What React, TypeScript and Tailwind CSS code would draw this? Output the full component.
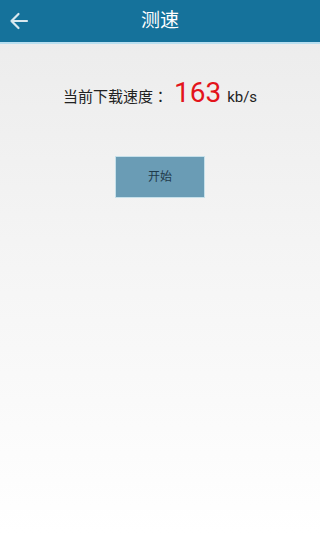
import React from "react";

export default function App() {
  return (
    <div
      className="w-[320px] h-[533px] flex flex-col bg-gradient-to-b from-[#ebebeb] to-[#ffffff]"
      style={{ fontFamily: 'Roboto, "Noto Sans CJK SC", sans-serif' }}
    >
      <div className="h-[44px] bg-[#15729b] border-b-2 border-[#b9dff0] flex items-center relative shrink-0">
        <svg
          className="absolute left-[9px] top-[12px]"
          width="20"
          height="18"
          viewBox="0 0 20 18"
          fill="none"
          stroke="#d9e8ef"
          strokeWidth="2.2"
          strokeLinecap="round"
          strokeLinejoin="round"
        >
          <path d="M18 9H2.5M9.5 2L2.5 9l7 7" />
        </svg>
        <div className="flex-1 text-center text-white text-[19px]">测速</div>
      </div>

      <div className="flex items-baseline justify-center mt-[35px] text-[#222]">
        <span className="text-[15px]">当前下载速度</span>
        <span className="text-[15px] mr-[6px] font-['Noto_Sans_CJK_JP']">：</span>
        <span className="text-[28px] text-[#e3141b] mr-[6px] leading-none">163</span>
        <span className="text-[15px]">kb/s</span>
      </div>

      <div className="flex justify-center mt-[47px]">
        <button className="w-[90px] h-[42px] bg-[#6a9cb5] border border-[#c6e0ea] text-[12px] text-[#1f3a4a]">
          开始
        </button>
      </div>
    </div>
  );
}
